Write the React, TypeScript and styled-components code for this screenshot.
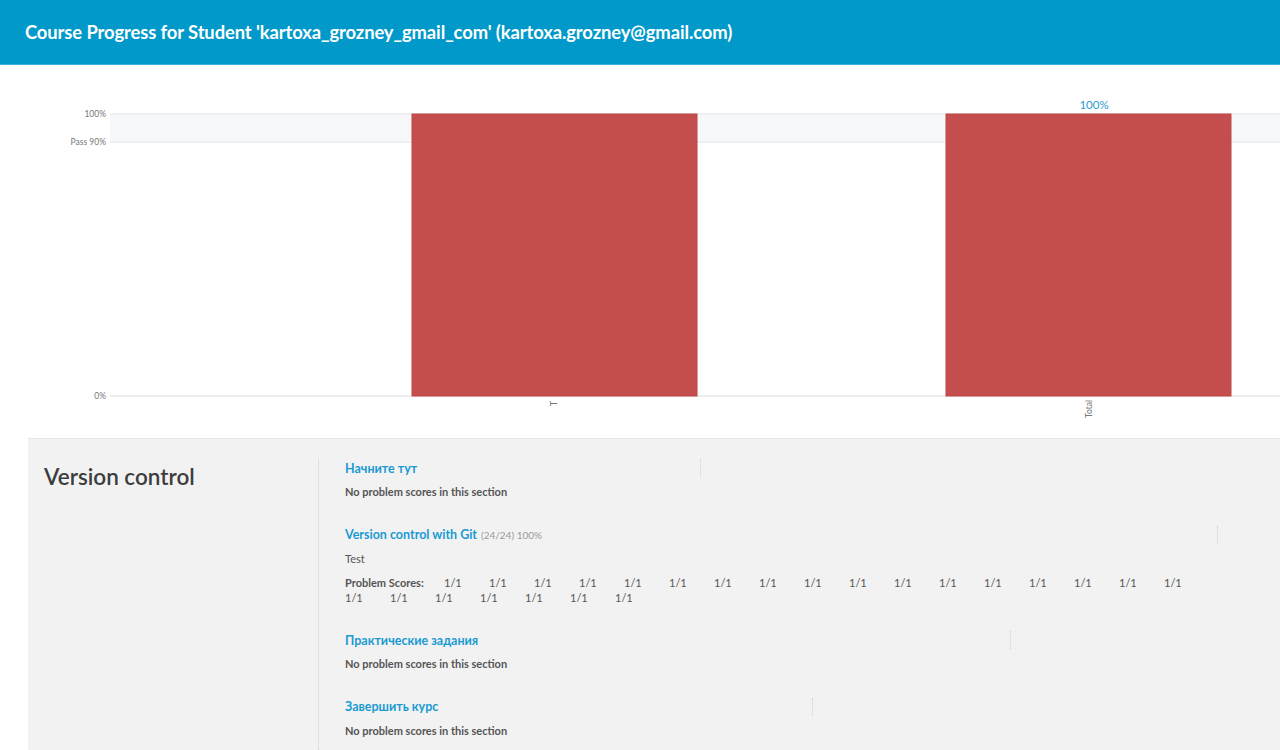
import React from "react";
import styled, { createGlobalStyle } from "styled-components";

const Global = createGlobalStyle`
  html, body { margin: 0; padding: 0; background: #fff; }
  body { font-family: Lato, "Noto Sans", "DejaVu Sans", sans-serif; overflow: hidden; }
`;

const Page = styled.div`
  width: 1280px;
  min-height: 750px;
`;

const Header = styled.header`
  height: 64px;
  background: #0099c9;
  border-bottom: 1px solid #3db3dc;
  display: flex;
  align-items: center;
  padding-left: 25px;
`;

const Title = styled.h1`
  margin: 0;
  color: #fff;
  font-size: 18.4px;
  font-weight: 700;
  letter-spacing: -0.1px;
`;

const ChartWrap = styled.div`
  height: 373px;
`;

const Content = styled.section`
  margin-left: 28px;
  background: #f2f2f2;
  border-top: 1px solid #e6e6e6;
  display: grid;
  grid-template-columns: 290px 1fr;
  min-height: 320px;
`;

const ChapterCol = styled.div`
  padding: 24px 0 0 16px;
`;

const ChapterTitle = styled.h2`
  margin: 0;
  font-size: 22.5px;
  font-weight: 600;
  color: #3d3d3d;
`;

const SectionsCol = styled.div`
  margin-top: 20px;
  border-left: 1px dotted #cfcfcf;
  padding-left: 26px;
  width: 880px;
`;

const SectionBlock = styled.div`
  margin-bottom: 26.6px;
`;

const SectionHead = styled.div<{ $w: number }>`
  width: ${(p) => p.$w}px;
  height: 18px;
  border-right: 1px dotted #d0d0d0;
  display: flex;
  align-items: center;
`;

const SectionLink = styled.a`
  color: #1a9ad2;
  font-size: 12.5px;
  font-weight: 700;
  text-decoration: none;
`;

const Meta = styled.span`
  color: #9a9a9a;
  font-size: 10px;
  margin-left: 4px;
`;

const Note = styled.p`
  margin: 7px 0 0;
  line-height: 15px;
  color: #555;
  font-size: 11px;
  font-weight: 700;
`;

const Plain = styled.p`
  margin: 7px 0 0;
  line-height: 15px;
  color: #555;
  font-size: 11px;
  font-weight: 400;
`;

const Scores = styled.div`
  margin-top: 9px;
  display: flex;
  flex-wrap: wrap;
  width: 870px;
  line-height: 15px;
  color: #555;
  font-size: 11px;
`;

const ScoresLabel = styled.span`
  width: 99px;
  font-weight: 700;
`;

const Score = styled.span`
  width: 45px;
`;

type Sec = {
  title: string;
  w: number;
  meta?: string;
  test?: boolean;
  scores?: number;
};

const sections: Sec[] = [
  { title: "Начните тут", w: 355 },
  { title: "Version control with Git", w: 872, meta: "(24/24) 100%", test: true, scores: 24 },
  { title: "Практические задания", w: 665 },
  { title: "Завершить курс", w: 467 },
];

const Chart = () => {
  const y = (p: number) => 331 - (p / 100) * 282;
  const axis = { fill: "#777", fontSize: 8.5, fontFamily: "Lato, sans-serif" } as const;
  return (
    <svg width="1280" height="373" viewBox="0 0 1280 373">
      <rect x="110" y={y(100)} width="1170" height={y(90) - y(100)} fill="#f7f8fa" />
      <line x1="110" x2="1280" y1={y(100)} y2={y(100)} stroke="#e4e5e8" />
      <line x1="110" x2="1280" y1={y(90)} y2={y(90)} stroke="#e4e5e8" />
      <line x1="110" x2="1280" y1={y(0)} y2={y(0)} stroke="#dcdcdc" />
      <text x="106" y={y(100) + 3} textAnchor="end" {...axis}>100%</text>
      <text x="106" y={y(90) + 3} textAnchor="end" {...axis}>Pass 90%</text>
      <text x="106" y={y(0) + 3} textAnchor="end" {...axis}>0%</text>
      <rect x="412" y={y(100)} width="285" height={282} fill="#c44d4d" stroke="#bf4747" strokeWidth="1" />
      <rect x="946" y={y(100)} width="285" height={282} fill="#c44d4d" stroke="#bf4747" strokeWidth="1" />
      <text x="1094" y="44" textAnchor="middle" fill="#2a9bd0" fontSize="11.5" fontFamily="Lato, sans-serif">100%</text>
      <text transform="translate(557 336) rotate(-90)" textAnchor="end" {...axis}>T</text>
      <text transform="translate(1092 335) rotate(-90)" textAnchor="end" {...axis}>Total</text>
    </svg>
  );
};

export default function App() {
  return (
    <Page>
      <Global />
      <Header>
        <Title>Course Progress for Student 'kartoxa_grozney_gmail_com' (kartoxa.grozney@gmail.com)</Title>
      </Header>
      <ChartWrap>
        <Chart />
      </ChartWrap>
      <Content>
        <ChapterCol>
          <ChapterTitle>Version control</ChapterTitle>
        </ChapterCol>
        <SectionsCol>
          {sections.map((s) => (
            <SectionBlock key={s.title}>
              <SectionHead $w={s.w}>
                <SectionLink href="#">{s.title}</SectionLink>
                {s.meta && <Meta>{s.meta}</Meta>}
              </SectionHead>
              {s.test ? (
                <>
                  <Plain>Test</Plain>
                  <Scores>
                    <ScoresLabel>Problem Scores:</ScoresLabel>
                    {Array.from({ length: s.scores ?? 0 }).map((_, i) => (
                      <Score key={i}>1/1</Score>
                    ))}
                  </Scores>
                </>
              ) : (
                <Note>No problem scores in this section</Note>
              )}
            </SectionBlock>
          ))}
        </SectionsCol>
      </Content>
    </Page>
  );
}
